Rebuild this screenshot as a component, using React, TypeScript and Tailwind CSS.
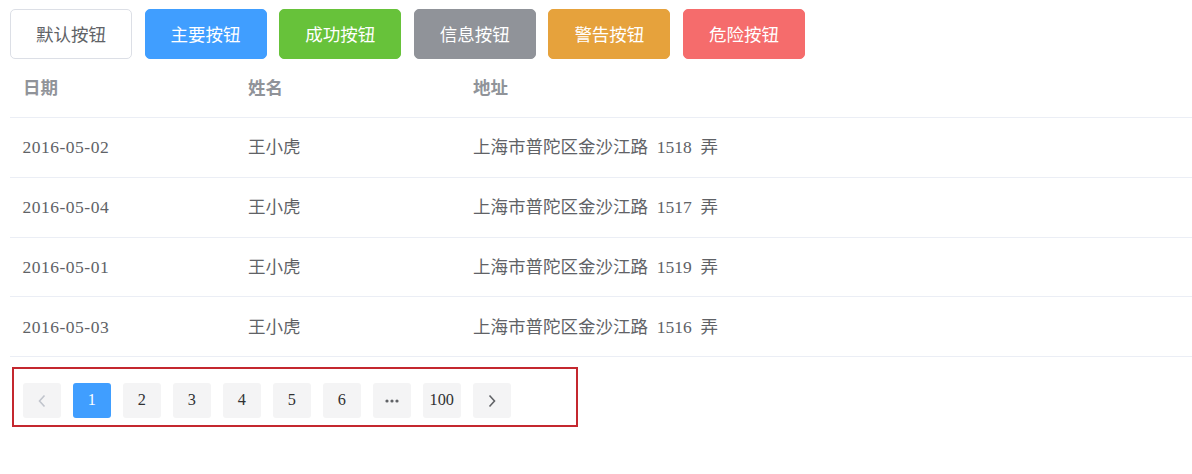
import React from 'react';

const buttons = [
  { label: '默认按钮', cls: 'bg-white border border-[#dcdfe6] text-[#606266]' },
  { label: '主要按钮', cls: 'bg-[#409eff] border border-[#409eff] text-white' },
  { label: '成功按钮', cls: 'bg-[#67c23a] border border-[#67c23a] text-white' },
  { label: '信息按钮', cls: 'bg-[#909399] border border-[#909399] text-white' },
  { label: '警告按钮', cls: 'bg-[#e6a23c] border border-[#e6a23c] text-white' },
  { label: '危险按钮', cls: 'bg-[#f56c6c] border border-[#f56c6c] text-white' },
];

// en spaces: the original font has half-width spaces
const rows = [
  { date: '2016-05-02', name: '王小虎', address: '上海市普陀区金沙江路\u20021518\u2002弄' },
  { date: '2016-05-04', name: '王小虎', address: '上海市普陀区金沙江路\u20021517\u2002弄' },
  { date: '2016-05-01', name: '王小虎', address: '上海市普陀区金沙江路\u20021519\u2002弄' },
  { date: '2016-05-03', name: '王小虎', address: '上海市普陀区金沙江路\u20021516\u2002弄' },
];

const pages = ['1', '2', '3', '4', '5', '6', 'more', '100'];

// thin chevron like element's arrow icons
function Arrow({ dir, color }: { dir: 'left' | 'right'; color: string }) {
  return (
    <svg width="10" height="14" viewBox="0 0 10 14" fill="none">
      <polyline
        points={dir === 'left' ? '7.5,1.5 2.5,7 7.5,12.5' : '2.5,1.5 7.5,7 2.5,12.5'}
        stroke={color}
        strokeWidth="1.6"
      />
    </svg>
  );
}

function Dots() {
  return (
    <svg width="14" height="4" viewBox="0 0 14 4">
      <circle cx="2" cy="2" r="1.6" fill="#606266" />
      <circle cx="7" cy="2" r="1.6" fill="#606266" />
      <circle cx="12" cy="2" r="1.6" fill="#606266" />
    </svg>
  );
}

export default function App() {
  return (
    <div className="w-[1192px] h-[474px] bg-white overflow-hidden pt-[9px] pl-[10px]">
      <div className="flex gap-[12.6px] font-['Noto_Sans_CJK_SC',sans-serif]">
        {buttons.map((b) => (
          <div
            key={b.label}
            className={`w-[122px] h-[50px] rounded-[5px] flex items-center justify-center text-[17.5px] ${b.cls}`}
          >
            {b.label}
          </div>
        ))}
      </div>

      <div className="font-['Liberation_Serif','Noto_Sans_CJK_SC',serif] text-[17.5px]">
        <div className="flex h-[59px] items-center border-b border-[#ebeef5] text-[#909399] font-bold">
          <div className="w-[225.5px] pl-[13px]">日期</div>
          <div className="w-[225px] pl-[12.5px]">姓名</div>
          <div className="flex-1 pl-[12.5px]">地址</div>
        </div>
        {rows.map((r) => (
          <div
            key={r.date}
            className="flex h-[59.75px] items-center border-b border-[#ebeef5] text-[#606266]"
          >
            <div className="w-[225.5px] pl-[12.5px] tracking-[0.5px]">{r.date}</div>
            <div className="w-[225px] pl-[12.5px]">{r.name}</div>
            <div className="flex-1 pl-[12.5px] whitespace-pre">{r.address}</div>
          </div>
        ))}
      </div>

      <div className="ml-[2px] mt-[10px] w-[566px] h-[60px] border-2 border-[#c4282f] pl-[9px] pt-[14px]">
        <div className="flex gap-[12.5px] font-['Liberation_Serif',serif] text-[16.25px] text-[#303133]">
          <div className="w-[37.5px] h-[35px] rounded-[3px] bg-[#f4f4f5] flex items-center justify-center">
            <Arrow dir="left" color="#c0c4cc" />
          </div>
          {pages.map((p) => (
            <div
              key={p}
              className={`w-[37.5px] h-[35px] rounded-[3px] flex items-center justify-center ${
                p === '1' ? 'bg-[#409eff] text-white' : 'bg-[#f4f4f5] text-[#303133]'
              }`}
            >
              {p === 'more' ? <Dots /> : p}
            </div>
          ))}
          <div className="w-[37.5px] h-[35px] rounded-[3px] bg-[#f4f4f5] flex items-center justify-center">
            <Arrow dir="right" color="#606266" />
          </div>
        </div>
      </div>
    </div>
  );
}
